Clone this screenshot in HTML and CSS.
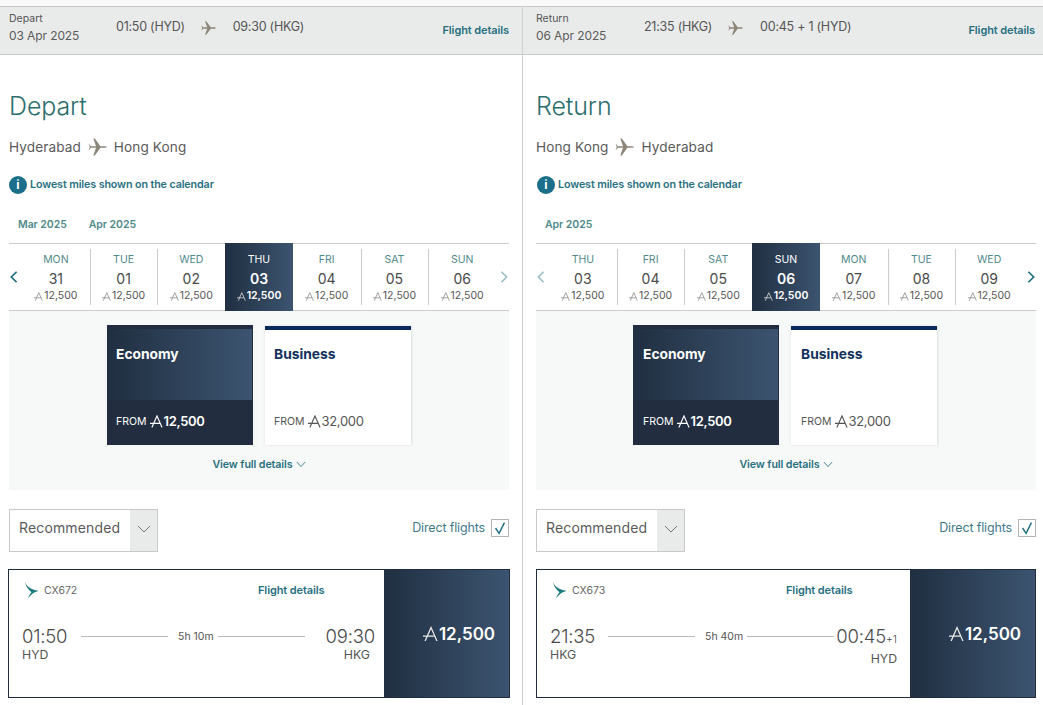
FILE: index.html
```html
<!DOCTYPE html>
<html lang="en">
<head>
<meta charset="utf-8">
<title>Flight selection</title>
<link rel="stylesheet" href="styles.css">
</head>
<body>
<svg class="defs" width="0" height="0" aria-hidden="true">
  <symbol id="plane" viewBox="0 0 20 20"><path d="M1.5 6.5 L4 9.2 H9 L6.3 1.5 H7.8 L13.4 9.2 H18 Q20 9.6 20 10 Q20 10.4 18 10.8 H13.4 L7.8 18.5 H6.3 L9 10.8 H4 L1.5 13.5 L2.8 10 Z"/></symbol>
  <symbol id="miles" viewBox="0 0 14 14"><path d="M2 13.5 L7.5 1 L13 13.5 M0 9 H11" fill="none" stroke="currentColor" stroke-width="1.2"/></symbol>
  <symbol id="wing" viewBox="0 0 15 18"><path d="M1 0 C2 5 6 8.5 15 10 C11 10.5 8 12.5 4 17.5 C5 14.5 6.2 12.5 7.5 11.2 C4 8.5 1.5 5 1 0Z"/></symbol>
</svg>
<main class="page">
  <section class="panel panel-left">
    <header class="summary">
      <div class="summary-date"><span class="summary-label">Depart</span><span class="summary-day">03 Apr 2025</span></div>
      <div class="summary-times"><span class="summary-time">01:50 (HYD)</span><svg class="plane-sm"><use href="#plane"/></svg><span class="summary-time">09:30 (HKG)</span></div>
      <a class="link summary-link">Flight details</a>
    </header>
    <h1 class="title">Depart</h1>
    <div class="route"><span>Hyderabad</span><svg class="plane-lg"><use href="#plane"/></svg><span>Hong Kong</span></div>
    <div class="notice"><span class="info">i</span><span class="link">Lowest miles shown on the calendar</span></div>
    <div class="months"><span>Mar 2025</span><span>Apr 2025</span></div>
    <div class="calendar">
      <svg class="arrow arrow-strong" viewBox="0 0 10 16"><polyline points="8,2 2,8 8,14"/></svg>
      <div class="days">
        <div class="day"><span class="dow">MON</span><span class="date">31</span><span class="fare"><svg class="mi"><use href="#miles"/></svg>12,500</span></div>
        <div class="day"><span class="dow">TUE</span><span class="date">01</span><span class="fare"><svg class="mi"><use href="#miles"/></svg>12,500</span></div>
        <div class="day"><span class="dow">WED</span><span class="date">02</span><span class="fare"><svg class="mi"><use href="#miles"/></svg>12,500</span></div>
        <div class="day day-on"><span class="dow">THU</span><span class="date">03</span><span class="fare"><svg class="mi"><use href="#miles"/></svg>12,500</span></div>
        <div class="day"><span class="dow">FRI</span><span class="date">04</span><span class="fare"><svg class="mi"><use href="#miles"/></svg>12,500</span></div>
        <div class="day"><span class="dow">SAT</span><span class="date">05</span><span class="fare"><svg class="mi"><use href="#miles"/></svg>12,500</span></div>
        <div class="day"><span class="dow">SUN</span><span class="date">06</span><span class="fare"><svg class="mi"><use href="#miles"/></svg>12,500</span></div>
      </div>
      <svg class="arrow arrow-faint" viewBox="0 0 10 16"><polyline points="2,2 8,8 2,14"/></svg>
    </div>
    <div class="cabins">
      <div class="cabin-row">
        <div class="cabin cabin-eco"><div class="cabin-top"><span class="cabin-name">Economy</span></div><div class="cabin-bottom"><span class="from">FROM</span><svg class="mi-md"><use href="#miles"/></svg><span class="from-price">12,500</span></div></div>
        <div class="cabin cabin-bus"><div class="cabin-top"><span class="cabin-name">Business</span></div><div class="cabin-bottom"><span class="from">FROM</span><svg class="mi-md"><use href="#miles"/></svg><span class="from-price">32,000</span></div></div>
      </div>
      <div class="full-details"><span class="link">View full details</span><svg class="chev-sm" viewBox="0 0 12 8"><polyline points="1,1 6,6.5 11,1"/></svg></div>
    </div>
    <div class="filters">
      <div class="sort"><span class="sort-text">Recommended</span><span class="sort-btn"><svg class="chev" viewBox="0 0 14 8"><polyline points="1,1 7,7 13,1"/></svg></span></div>
      <div class="direct"><span>Direct flights</span><span class="check"><svg viewBox="0 0 18 18"><polyline points="4,9 8,15 14,3"/></svg></span></div>
    </div>
    <article class="flight">
      <div class="flight-body">
        <div class="flight-head"><div class="carrier"><svg class="wing"><use href="#wing"/></svg><span>CX672</span></div><a class="link flight-link">Flight details</a></div>
        <div class="flight-times">
          <div class="end"><span class="clock">01:50</span><span class="code">HYD</span></div>
          <div class="timeline"><span class="rule"></span><span class="dur">5h 10m</span><span class="rule"></span></div>
          <div class="end end-arr"><span class="clock">09:30</span><span class="code code-inset">HKG</span></div>
        </div>
      </div>
      <div class="flight-price"><svg class="mi-lg"><use href="#miles"/></svg>12,500</div>
    </article>
  </section>

  <section class="panel panel-right">
    <header class="summary">
      <div class="summary-date"><span class="summary-label">Return</span><span class="summary-day">06 Apr 2025</span></div>
      <div class="summary-times"><span class="summary-time">21:35 (HKG)</span><svg class="plane-sm"><use href="#plane"/></svg><span class="summary-time">00:45 + 1 (HYD)</span></div>
      <a class="link summary-link">Flight details</a>
    </header>
    <h1 class="title">Return</h1>
    <div class="route"><span>Hong Kong</span><svg class="plane-lg"><use href="#plane"/></svg><span>Hyderabad</span></div>
    <div class="notice"><span class="info">i</span><span class="link">Lowest miles shown on the calendar</span></div>
    <div class="months"><span>Apr 2025</span></div>
    <div class="calendar">
      <svg class="arrow arrow-faint" viewBox="0 0 10 16"><polyline points="8,2 2,8 8,14"/></svg>
      <div class="days">
        <div class="day"><span class="dow">THU</span><span class="date">03</span><span class="fare"><svg class="mi"><use href="#miles"/></svg>12,500</span></div>
        <div class="day"><span class="dow">FRI</span><span class="date">04</span><span class="fare"><svg class="mi"><use href="#miles"/></svg>12,500</span></div>
        <div class="day"><span class="dow">SAT</span><span class="date">05</span><span class="fare"><svg class="mi"><use href="#miles"/></svg>12,500</span></div>
        <div class="day day-on"><span class="dow">SUN</span><span class="date">06</span><span class="fare"><svg class="mi"><use href="#miles"/></svg>12,500</span></div>
        <div class="day"><span class="dow">MON</span><span class="date">07</span><span class="fare"><svg class="mi"><use href="#miles"/></svg>12,500</span></div>
        <div class="day"><span class="dow">TUE</span><span class="date">08</span><span class="fare"><svg class="mi"><use href="#miles"/></svg>12,500</span></div>
        <div class="day"><span class="dow">WED</span><span class="date">09</span><span class="fare"><svg class="mi"><use href="#miles"/></svg>12,500</span></div>
      </div>
      <svg class="arrow arrow-strong" viewBox="0 0 10 16"><polyline points="2,2 8,8 2,14"/></svg>
    </div>
    <div class="cabins">
      <div class="cabin-row">
        <div class="cabin cabin-eco"><div class="cabin-top"><span class="cabin-name">Economy</span></div><div class="cabin-bottom"><span class="from">FROM</span><svg class="mi-md"><use href="#miles"/></svg><span class="from-price">12,500</span></div></div>
        <div class="cabin cabin-bus"><div class="cabin-top"><span class="cabin-name">Business</span></div><div class="cabin-bottom"><span class="from">FROM</span><svg class="mi-md"><use href="#miles"/></svg><span class="from-price">32,000</span></div></div>
      </div>
      <div class="full-details"><span class="link">View full details</span><svg class="chev-sm" viewBox="0 0 12 8"><polyline points="1,1 6,6.5 11,1"/></svg></div>
    </div>
    <div class="filters">
      <div class="sort"><span class="sort-text">Recommended</span><span class="sort-btn"><svg class="chev" viewBox="0 0 14 8"><polyline points="1,1 7,7 13,1"/></svg></span></div>
      <div class="direct"><span>Direct flights</span><span class="check"><svg viewBox="0 0 18 18"><polyline points="4,9 8,15 14,3"/></svg></span></div>
    </div>
    <article class="flight">
      <div class="flight-body">
        <div class="flight-head"><div class="carrier"><svg class="wing"><use href="#wing"/></svg><span>CX673</span></div><a class="link flight-link">Flight details</a></div>
        <div class="flight-times">
          <div class="end"><span class="clock">21:35</span><span class="code">HKG</span></div>
          <div class="timeline"><span class="rule"></span><span class="dur">5h 40m</span><span class="rule"></span></div>
          <div class="end end-arr end-next"><span class="clock">00:45<small class="plus">+1</small></span><span class="code">HYD</span></div>
        </div>
      </div>
      <div class="flight-price"><svg class="mi-lg"><use href="#miles"/></svg>12,500</div>
    </article>
  </section>
</main>
</body>
</html>
```
FILE: styles.css
```css
* { box-sizing: border-box; }
html, body { margin: 0; padding: 0; }
body {
  width: 1043px;
  height: 705px;
  overflow: hidden;
  background: #fff;
  color: #555;
  font-family: "Inter", "Liberation Sans", sans-serif;
}
.defs { position: absolute; }
.page {
  display: flex;
  height: 705px;
  padding-top: 6px;
  background: linear-gradient(#f9f9f9 6px, #fff 6px);
}
.panel {
  display: flex;
  flex-direction: column;
  background: #fff;
}
.panel-left { width: 523px; border-right: 1px solid #d0d0d0; }
.panel-right { width: 520px; }

.link { color: #26707f; font-weight: 600; font-size: 10.7px; letter-spacing: -0.1px; text-decoration: none; }

.summary {
  display: flex;
  align-items: flex-start;
  height: 49px;
  padding: 5px 13px 0 9px;
  background: #e9ebea;
  border-top: 1px solid #c9c9c9;
  border-bottom: 1px solid #c9c9c9;
}
.panel-right .summary { padding-left: 13px; padding-right: 8px; }
.summary-date { display: flex; flex-direction: column; width: 107px; }
.panel-right .summary-date { width: 108px; }
.summary-label { font-size: 10.5px; line-height: 13px; color: #555; }
.summary-day { font-size: 12px; line-height: 18px; margin-top: 2px; letter-spacing: -0.1px; color: #5b5b5b; }
.summary-times { display: flex; align-items: center; height: 32px; padding-bottom: 3px; flex: 1; }
.summary-time { font-size: 12.5px; letter-spacing: -0.25px; color: #555; }
.plane-sm { width: 16px; height: 16px; margin: 3px 17px 0 15px; fill: #8c8578; }
.summary-link { margin-top: 11px; font-size: 11px; }

.title {
  margin: 35px 0 0 9px;
  font-size: 25px;
  line-height: 32px;
  font-weight: 300;
  color: #2b6e6c;
  letter-spacing: -0.1px;
}
.panel-right .title, .panel-right .route { margin-left: 13px; }
.panel-right .notice { margin-left: 14px; }
.route {
  display: flex;
  align-items: center;
  margin: 14px 0 0 9px;
  height: 22px;
  font-size: 13.6px;
  color: #5a5a5a;
  letter-spacing: 0.1px;
}
.plane-lg { width: 20px; height: 20px; margin: 0 7px 0 6px; fill: #8c8578; }
.notice { display: flex; align-items: center; gap: 3px; margin: 17px 0 0 9px; height: 19px; }
.info {
  display: flex;
  align-items: center;
  justify-content: center;
  width: 18px;
  height: 18px;
  border-radius: 50%;
  background: #1c6f8a;
  color: #fff;
  font-size: 12px;
  font-weight: 700;
}
.months {
  display: flex;
  gap: 22px;
  height: 14px;
  margin: 24px 0 0 18px;
  font-size: 10.5px;
  line-height: 14px;
  font-weight: 600;
  letter-spacing: -0.05px;
  color: #4f8a8b;
}
.panel-right .months { margin-left: 22px; }

.calendar,
.cabins,
.filters { margin-left: 9px; width: 500px; }
.panel-right .calendar,
.panel-right .cabins,
.panel-right .filters { margin-left: 13px; }

.calendar {
  display: flex;
  align-items: center;
  margin-top: 11px;
  height: 68px;
  border-top: 1px solid #ccc;
  border-bottom: 1px solid #ccc;
}
.arrow { width: 10px; height: 14px; flex: none; fill: none; stroke-width: 2; }
.arrow:first-child { margin-right: 3px; }
.arrow:last-child { margin-left: 3px; }
.arrow-strong { stroke: #1f6f80; }
.arrow-faint { stroke: #9cc1c5; }
.days { flex: 1; display: grid; grid-template-columns: repeat(7, 1fr); height: 68px; margin-top: -1px; margin-bottom: -1px; }
.day {
  position: relative;
  display: flex;
  flex-direction: column;
  align-items: center;
  padding-top: 10px;
}
.day + .day::before {
  content: "";
  position: absolute;
  left: 0;
  top: 6px;
  bottom: 6px;
  width: 1px;
  background: #ccc;
}
.day-on + .day::before, .day-on::before { display: none; }
.dow { font-size: 10.5px; line-height: 13px; color: #4f8a8b; }
.date { font-size: 14px; line-height: 18px; margin-top: 4px; color: #4a4a4a; }
.fare { display: flex; align-items: center; font-size: 10.5px; line-height: 14px; margin-top: 1px; color: #555; }
.mi { width: 9px; height: 9px; margin-right: 1px; color: #888; }
.day-on { background: linear-gradient(90deg, #202f41, #3c5470); }
.day-on .dow, .day-on .date, .day-on .fare { color: #fff; }
.day-on .date, .day-on .fare { font-weight: 600; }
.day-on .mi { color: #ddd; }

.cabins { height: 179px; padding-top: 14px; background: #f7f8f8; }
.cabin-row { display: flex; justify-content: center; gap: 12px; }
.panel-right .cabin-row { padding-right: 2px; }
.cabin { display: flex; flex-direction: column; width: 146px; height: 120px; }
.cabin-top { height: 75px; padding: 18px 9px 0; }
.cabin-name { font-size: 13.8px; line-height: 20px; font-weight: 700; }
.cabin-bottom { display: flex; align-items: center; height: 45px; padding: 0 9px 3px 9px; }
.panel-right .cabin-top, .panel-right .cabin-bottom { padding-left: 10px; }
.from { font-size: 10.5px; }
.from-price { font-size: 13px; letter-spacing: -0.3px; }
.mi-md { width: 13px; height: 13px; margin: 0 0 0 4px; }
.cabin-eco { background: #222e40; color: #fff; }
.cabin-eco .cabin-top { margin: 4px 1px 0 0; height: 71px; padding-top: 14px; background: linear-gradient(90deg, #202f41, #3c5470); }
.cabin-eco .from-price { font-weight: 600; }
.cabin-bus { background: #fff; border-top: 4px solid #0a2a5e; margin-top: 1px; height: 119px; box-shadow: 1px 0 2px #ddd, -1px 0 2px #eee; color: #555; }
.cabin-bus .cabin-top { height: 70px; padding-top: 13px; }
.cabin-bus .cabin-name { color: #11305c; }
.full-details { display: flex; align-items: center; justify-content: center; gap: 3px; margin-top: 12px; height: 14px; }
.chev-sm { width: 10px; height: 7px; fill: none; stroke: #26707f; stroke-width: 1; }

.filters { display: flex; align-items: center; justify-content: space-between; margin-top: 19px; height: 43px; }
.sort { display: flex; width: 149px; height: 43px; border: 1px solid #c9c9c9; }
.sort-text { flex: 1; padding-left: 9px; font-size: 14px; line-height: 36px; letter-spacing: 0.15px; color: #5a5a5a; }
.sort-btn { display: flex; align-items: center; justify-content: center; width: 27px; padding-bottom: 3px; background: #e9ebea; }
.chev { width: 14px; height: 8px; fill: none; stroke: #777; stroke-width: 1; }
.direct { display: flex; align-items: center; gap: 6px; margin-top: -5px; font-size: 12.5px; color: #3f7a8a; letter-spacing: -0.15px; }
.direct span:first-child { margin-top: -2px; }
.check { width: 18px; height: 18px; border: 1px solid #b5b5b5; display: block; }
.check svg { display: block; width: 16px; height: 16px; fill: none; stroke: #1f6f80; stroke-width: 1.6; }

.flight { display: flex; height: 129px; margin: 17px 0 0 8px; border: 1px solid #1f2d3f; width: 502px; }
.panel-right .flight { width: 500px; margin-left: 13px; }
.flight-body { flex: 1; display: flex; flex-direction: column; }
.flight-head { display: flex; align-items: center; height: 40px; padding: 0 0 0 15px; }
.carrier { display: flex; align-items: center; gap: 5px; width: 234px; font-size: 10.5px; color: #666; }
.wing { width: 15px; height: 18px; fill: #1f7a7e; }
.flight-link { font-size: 11px; }
.flight-times { display: flex; margin-top: 15px; padding-left: 13px; }
.end { display: flex; flex-direction: column; width: 59px; flex: none; }
.panel-right .end:first-child { width: 58px; }
.clock { font-size: 18.5px; line-height: 22px; font-weight: 300; letter-spacing: -0.2px; color: #4a4a4a; }
.code { font-size: 12.3px; line-height: 14px; margin-top: 1px; color: #555; }
.timeline { display: flex; align-items: center; width: 224px; height: 22px; flex: none; }
.rule { height: 1px; width: 87px; flex: none; background: #bbb; }
.dur { padding: 0 4px 0 10px; font-size: 10.5px; color: #555; white-space: nowrap; }
.end-arr { flex: 1; align-items: flex-end; padding-right: 9px; width: auto; }
.code-inset { margin-right: 5px; }
.end-next { padding-right: 13px; }
.plus { font-size: 10.5px; letter-spacing: 0; }
.flight-price {
  display: flex;
  align-items: center;
  justify-content: center;
  gap: 1px;
  width: 125px;
  padding-left: 25px;
  flex: none;
  background: linear-gradient(90deg, #202f41, #3c5470);
  color: #fff;
  font-size: 17px;
  font-weight: 600;
}
.mi-lg { width: 15px; height: 16px; color: #e8e8e8; }
```
